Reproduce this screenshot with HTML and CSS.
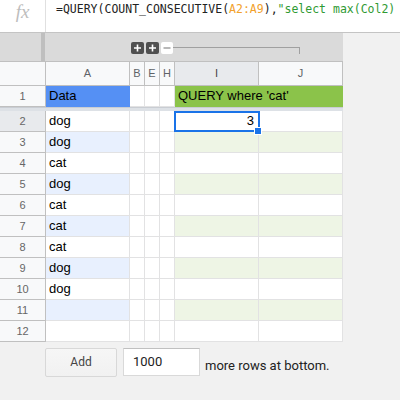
FILE: index.html
```html
<!DOCTYPE html>
<html>
<head>
<meta charset="utf-8">
<link rel="stylesheet" href="styles.css">
</head>
<body>
<div class="formula-bar">
  <div class="fx">fx</div>
  <div class="formula">=QUERY(COUNT_CONSECUTIVE(<span class="ref">A2:A9</span>),<span class="str">"select max(Col2)</span></div>
</div>
<div class="sheet">
  <div class="group-bar">
    <div class="g-space"></div>
    <div class="g-freeze"></div>
    <div class="g-controls">
      <div class="g-btn dark"><svg width="13" height="12" viewBox="0 0 13 12"><path d="M6.5 2.5v7M3 6h7" stroke="#fff" stroke-width="1.6"/></svg></div>
      <div class="g-btn dark"><svg width="13" height="12" viewBox="0 0 13 12"><path d="M6.5 2.5v7M3 6h7" stroke="#fff" stroke-width="1.6"/></svg></div>
      <div class="g-btn light"><svg width="12" height="12" viewBox="0 0 12 12"><path d="M2.5 6h7" stroke="#888" stroke-width="1.2"/></svg></div>
      <div class="g-line"></div>
    </div>
  </div>
  <div class="grid">
    <div class="corner"></div>
    <div class="ch">A</div><div class="ch">B</div><div class="ch">E</div><div class="ch">H</div><div class="ch sel">I</div><div class="ch">J</div>

    <div class="rh">1</div>
    <div class="c head-blue">Data</div><div class="c"></div><div class="c"></div><div class="c"></div>
    <div class="c head-green">QUERY where 'cat'</div>

    <div class="freeze"></div>

    <div class="rh sel">2</div>
    <div class="c">dog</div><div class="c"></div><div class="c"></div><div class="c"></div>
    <div class="c num active">3<div class="selection"></div><div class="handle"></div></div><div class="c"></div>

    <div class="rh">3</div>
    <div class="c alt-a">dog</div><div class="c"></div><div class="c"></div><div class="c"></div>
    <div class="c alt-g"></div><div class="c alt-g"></div>

    <div class="rh">4</div>
    <div class="c">cat</div><div class="c"></div><div class="c"></div><div class="c"></div>
    <div class="c"></div><div class="c"></div>

    <div class="rh">5</div>
    <div class="c alt-a">dog</div><div class="c"></div><div class="c"></div><div class="c"></div>
    <div class="c alt-g"></div><div class="c alt-g"></div>

    <div class="rh">6</div>
    <div class="c">cat</div><div class="c"></div><div class="c"></div><div class="c"></div>
    <div class="c"></div><div class="c"></div>

    <div class="rh">7</div>
    <div class="c alt-a">cat</div><div class="c"></div><div class="c"></div><div class="c"></div>
    <div class="c alt-g"></div><div class="c alt-g"></div>

    <div class="rh">8</div>
    <div class="c">cat</div><div class="c"></div><div class="c"></div><div class="c"></div>
    <div class="c"></div><div class="c"></div>

    <div class="rh">9</div>
    <div class="c alt-a">dog</div><div class="c"></div><div class="c"></div><div class="c"></div>
    <div class="c alt-g"></div><div class="c alt-g"></div>

    <div class="rh">10</div>
    <div class="c">dog</div><div class="c"></div><div class="c"></div><div class="c"></div>
    <div class="c"></div><div class="c"></div>

    <div class="rh">11</div>
    <div class="c alt-a"></div><div class="c"></div><div class="c"></div><div class="c"></div>
    <div class="c alt-g"></div><div class="c alt-g"></div>

    <div class="rh">12</div>
    <div class="c"></div><div class="c"></div><div class="c"></div><div class="c"></div>
    <div class="c"></div><div class="c"></div>
  </div>
</div>
<div class="footer">
  <div class="add-btn">Add</div>
  <div class="rows-input">1000</div>
  <div class="more-text">more rows at bottom.</div>
</div>
</body>
</html>
```
FILE: styles.css
```css
html, body {
  margin: 0;
  padding: 0;
}
body {
  width: 400px;
  height: 400px;
  overflow: hidden;
  background: #f1f1f1;
  font-family: "Liberation Sans", Arial, sans-serif;
}

.formula-bar {
  display: flex;
  height: 32px;
  background: #fff;
  border-bottom: 1px solid #c4c4c4;
}
.fx {
  width: 45px;
  border-right: 1px solid #e0e0e0;
  text-align: center;
  font-family: "Liberation Serif", serif;
  font-style: italic;
  font-size: 19px;
  line-height: 22px;
  padding-top: 1px;
  color: #bdbdbd;
  box-sizing: content-box;
}
.formula {
  padding: 2px 0 0 10px;
  font-family: "DejaVu Sans Mono", "Liberation Mono", monospace;
  font-size: 11.5px;
  line-height: 14px;
  color: #222;
  white-space: nowrap;
}
.formula .ref { color: #f2a12c; }
.formula .str { color: #2f9a33; }

.sheet {
  width: 343px;
}
.group-bar {
  display: flex;
  height: 28px;
  background: #dadada;
  border-bottom: 1px solid #c0c0c0;
}
.g-space { width: 41px; }
.g-freeze {
  width: 4px;
  background: #bfbfbf;
}
.g-controls {
  display: flex;
  align-items: flex-start;
  gap: 2px;
  margin-left: 86px;
  padding-top: 9px;
}
.g-btn {
  width: 13px;
  height: 12px;
  border-radius: 2px;
  display: flex;
}
.g-btn.dark { background: #4f4f4f; }
.g-btn.light { background: #fff; width: 12px; }
.g-line {
  width: 126px;
  height: 6px;
  margin-left: -2px;
  margin-top: 5px;
  border-top: 1px solid #a0a0a0;
  border-right: 1px solid #a0a0a0;
}

.grid {
  display: grid;
  grid-template-columns: 46px 84px 15px 15px 15px 84px 84px;
  grid-template-rows: 24px 21px 4px;
  grid-auto-rows: 21px;
}
.grid > div {
  box-sizing: border-box;
}
.corner {
  background: #f8f9fa;
  border-right: 1px solid #c0c0c0;
  border-bottom: 1px solid #c0c0c0;
}
.ch {
  background: #f8f9fa;
  border-right: 1px solid #c0c0c0;
  border-bottom: 1px solid #c0c0c0;
  text-align: center;
  font-size: 11px;
  line-height: 23px;
  color: #5f6368;
}
.ch.sel { background: #e8eaed; color: #444; }
.rh {
  background: #f8f9fa;
  border-right: 1px solid #c0c0c0;
  border-bottom: 1px solid #c0c0c0;
  text-align: center;
  font-size: 11px;
  line-height: 20px;
  color: #666;
}
.rh.sel { background: #e8eaed; }
.c {
  background: #fff;
  border-right: 1px solid #e2e2e3;
  border-bottom: 1px solid #e2e2e3;
  padding: 0 3px;
  font-family: "Liberation Sans Narrow", "Arial Narrow", "Liberation Sans", sans-serif;
  font-size: 13px;
  line-height: 20px;
  color: #000;
  white-space: nowrap;
  overflow: hidden;
}
.c.head-blue {
  background: #5590f4;
  border-color: #5590f4;
}
.c.head-green {
  grid-column: span 2;
  background: #8bc34a;
  border-color: #8bc34a;
}
.c.alt-a { background: #e8f0fe; }
.c.alt-g { background: #eef5e5; }
.c.num { text-align: right; }
.c.active {
  position: relative;
  overflow: visible;
  padding-right: 4px;
}
.selection {
  position: absolute;
  left: -1px;
  right: -2px;
  top: 0;
  bottom: -1px;
  border: 2px solid #1a73e8;
}
.handle {
  position: absolute;
  left: 79px;
  top: 16px;
  width: 6px;
  height: 6px;
  background: #1a73e8;
  border: 1px solid #fff;
}
.freeze {
  grid-column: 1 / -1;
  background: #dde1e6;
  border-top: 1px solid #c9cdd3;
}

.footer {
  display: flex;
  align-items: flex-start;
  padding: 6px 0 0 45px;
}
.add-btn {
  box-sizing: border-box;
  width: 72px;
  height: 29px;
  border: 1px solid #d8d8d8;
  border-radius: 2px;
  background: linear-gradient(#f6f6f6, #f1f1f1);
  text-align: center;
  font-family: Roboto, "Liberation Sans", sans-serif;
  font-size: 12px;
  font-weight: 400;
  line-height: 27px;
  color: #444;
}
.rows-input {
  box-sizing: border-box;
  width: 77px;
  height: 28px;
  margin-left: 6px;
  background: #fff;
  border: 1px solid #d9d9d9;
  border-top-color: #c0c0c0;
  padding-left: 9px;
  font-family: Roboto, "Liberation Sans", sans-serif;
  font-size: 13px;
  line-height: 26px;
  color: #222;
}
.more-text {
  margin: 10px 0 0 5px;
  font-family: Roboto, "Liberation Sans", sans-serif;
  font-size: 13px;
  line-height: 15px;
  color: #222;
}
```
